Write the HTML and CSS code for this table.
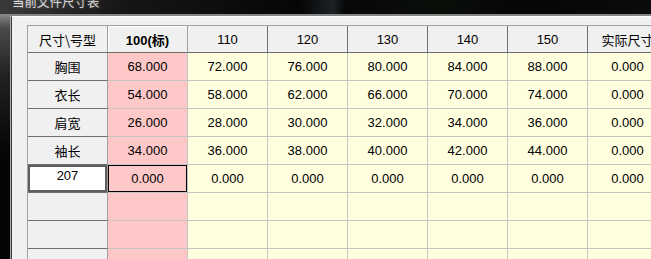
FILE: index.html
```html
<!DOCTYPE html>
<html lang="zh-CN">
<head>
<meta charset="UTF-8" />
<title>当前文件尺寸表</title>
<link rel="stylesheet" href="styles.css">
</head>
<body>

<div class="window">
  <div class="caption"><span class="caption-text">当前文件尺寸表</span></div>
  <div class="frame">
    <div class="client">
      <table class="size-grid">
        <thead>
          <tr>
            <th class="corner">尺寸\号型</th>
            <th class="base">100(标)</th>
            <th>110</th>
            <th>120</th>
            <th>130</th>
            <th>140</th>
            <th>150</th>
            <th>实际尺寸</th>
          </tr>
        </thead>
        <tbody>
          <tr>
            <td class="part">胸围</td>
            <td class="base">68.000</td><td>72.000</td><td>76.000</td><td>80.000</td><td>84.000</td><td>88.000</td><td>0.000</td>
          </tr>
          <tr>
            <td class="part">衣长</td>
            <td class="base">54.000</td><td>58.000</td><td>62.000</td><td>66.000</td><td>70.000</td><td>74.000</td><td>0.000</td>
          </tr>
          <tr>
            <td class="part">肩宽</td>
            <td class="base">26.000</td><td>28.000</td><td>30.000</td><td>32.000</td><td>34.000</td><td>36.000</td><td>0.000</td>
          </tr>
          <tr>
            <td class="part">袖长</td>
            <td class="base">34.000</td><td>36.000</td><td>38.000</td><td>40.000</td><td>42.000</td><td>44.000</td><td>0.000</td>
          </tr>
          <tr>
            <td class="part editing">207</td>
            <td class="base current">0.000</td><td>0.000</td><td>0.000</td><td>0.000</td><td>0.000</td><td>0.000</td><td>0.000</td>
          </tr>
          <tr>
            <td class="part"></td>
            <td class="base"></td><td></td><td></td><td></td><td></td><td></td><td></td>
          </tr>
          <tr>
            <td class="part"></td>
            <td class="base"></td><td></td><td></td><td></td><td></td><td></td><td></td>
          </tr>
          <tr>
            <td class="part"></td>
            <td class="base"></td><td></td><td></td><td></td><td></td><td></td><td></td>
          </tr>
        </tbody>
      </table>
    </div>
  </div>
</div>

</body>
</html>
```
FILE: styles.css
```css
body {
  margin: 0;
  background: #0b0b0b;
  font-family: "Liberation Sans", "Noto Sans CJK SC", sans-serif;
  font-size: 13px;
  color: #000;
}
.window {
  height: 259px;
  overflow: hidden;
}
/* title strip, only the bottom of the caption shows */
.caption {
  height: 14px;
  overflow: hidden;
  background: linear-gradient(to right, #3a3a3a 0, #161616 120px, #060606 300px, #1c2226 333px, #070707 345px, #0a0f0a 440px, #050505 520px, #0b0b0b 100%);
}
.caption-text {
  display: block;
  margin-top: -6px;
  padding-left: 12px;
  font-family: "Noto Sans CJK SC", sans-serif;
  font-size: 12.5px;
  line-height: 15px;
  color: #d6d6d6;
  text-shadow: 0 0 3px rgba(255,255,255,0.35);
}
.frame {
  padding: 2px 0 0 11px;
  background: linear-gradient(to bottom, #8a8a8a 0, #4a4a4a 14px, #222 60px, #050505 140px);
}
.client {
  height: 259px;
  overflow: hidden;
  background: #f0f0f0;
  border-top: 1px solid #fdfdfd;
  border-left: 1px solid #3c3c3c;
  box-shadow: -1px 0 0 #a8a8a8;
  padding: 8px 0 0 15px;
}
/* size grid */
.size-grid {
  border-collapse: separate;
  border-spacing: 0;
  table-layout: fixed;
  width: 641px;
  border-top: 1px solid #a0a0a0;
  border-left: 1px solid #a0a0a0;
}
.size-grid th,
.size-grid td {
  width: 79px;
  padding: 0;
  text-align: center;
  white-space: nowrap;
  overflow: hidden;
  border-right: 1px solid #c4c4c4;
  border-bottom: 1px solid #c4c4c4;
  background: #ffffe0;
}
.size-grid th {
  height: 26px;
  font-weight: normal;
  background: #f0f0f0;
  border-right-color: #6e6e6e;
  border-bottom-color: #6e6e6e;
}
.size-grid th.corner {
  font-family: "Noto Sans CJK SC", sans-serif;
  border-right-color: #a0a0a0;
}
.size-grid th.base {
  font-weight: bold;
  border-right-color: #a0a0a0;
  box-shadow: inset 1px 1px 0 #fff;
}
.size-grid td {
  height: 27px;
}
.size-grid td.part {
  font-family: "Noto Sans CJK SC", sans-serif;
  background: #f0f0f0;
  border-right-color: #a0a0a0;
  border-bottom-color: #6e6e6e;
}
.size-grid td.base {
  background: #ffc8c8;
}
/* cell being typed into */
.size-grid td.editing {
  font-family: "Liberation Sans", sans-serif;
  background: #fff;
  box-shadow: inset 0 0 0 2px #5e5e5e;
  padding-bottom: 6px;
  height: 21px;
}
.size-grid td.current {
  box-shadow: inset 0 0 0 1px #000;
}
```
